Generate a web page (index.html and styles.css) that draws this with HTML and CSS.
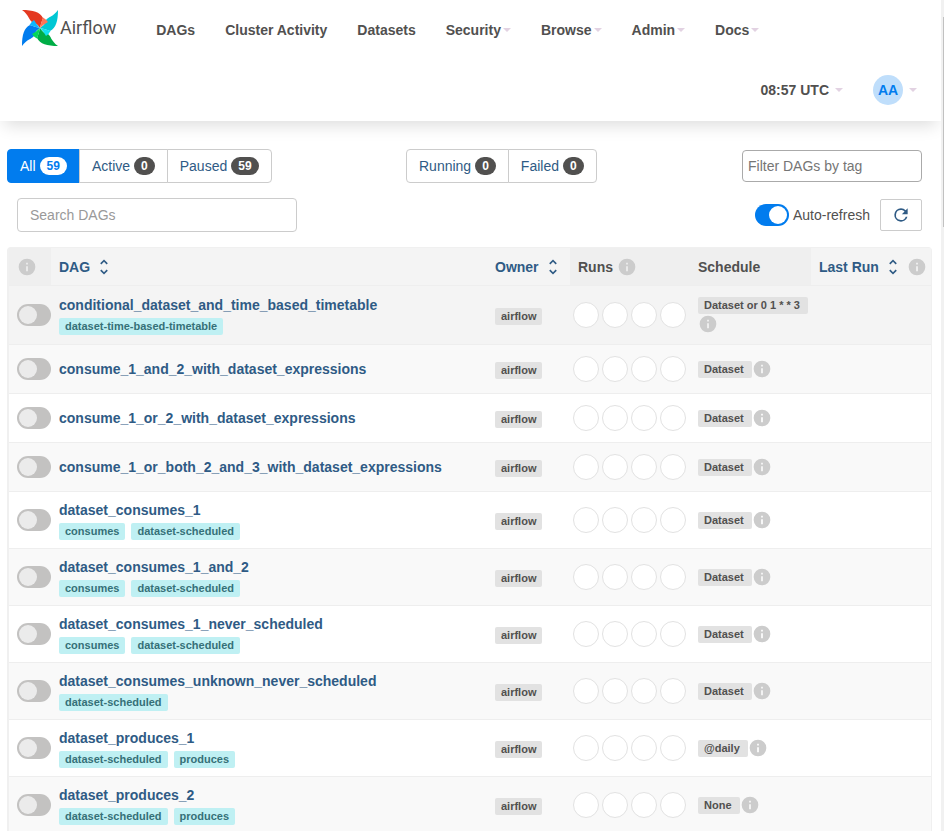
FILE: index.html
```html
<!DOCTYPE html>
<html lang="en">
<head>
    <meta charset="UTF-8">
    <meta name="viewport" content="width=device-width, initial-scale=1.0">
    <title>DAGs - Airflow</title>
    <link rel="stylesheet" href="styles.css">
</head>
<body>

    <!-- shared icons -->
    <svg class="sprite" aria-hidden="true">
        <symbol id="info" viewBox="0 0 24 24">
            <path d="M12 2a10 10 0 1 0 0 20 10 10 0 0 0 0-20zm1 15h-2v-6h2v6zm0-8h-2V7h2v2z"/>
        </symbol>
        <symbol id="sort" viewBox="0 0 24 24">
            <path d="M12 5.83 15.17 9l1.41-1.41L12 3 7.41 7.59 8.83 9 12 5.83zm0 12.34L8.83 15l-1.41 1.41L12 21l4.59-4.59L15.17 15 12 18.17z"/>
        </symbol>
        <symbol id="runs" viewBox="0 0 116 28">
            <circle cx="14" cy="14" r="12.5"/>
            <circle cx="43" cy="14" r="12.5"/>
            <circle cx="72" cy="14" r="12.5"/>
            <circle cx="101" cy="14" r="12.5"/>
        </symbol>
    </svg>

    <div class="page">
        <header class="navbar">
            <div class="nav-main">
                <a class="brand" href="#">
                    <svg class="logo" viewBox="-18 -18 36 36" aria-hidden="true">
                        <defs>
                            <path id="blade" d="M-18-18C-7-18 0-16 3-10Q1-5 0 0C-2-3-5-6-8-6C-11-8-11-13-18-18z"/>
                            <path id="fold" d="M3-10.500Q6-9 8-6Q4-4 0 0Q1-5 3-10.500z"/>
                        </defs>
                        <use href="#blade" fill="#e43921"/>
                        <use href="#blade" fill="#00c7d4" transform="rotate(90)"/>
                        <use href="#blade" fill="#00ad46" transform="rotate(180)"/>
                        <use href="#blade" fill="#017cee" transform="rotate(270)"/>
                        <use href="#fold" fill="#ff7557"/>
                        <use href="#fold" fill="#11e1ee" transform="rotate(90)"/>
                        <use href="#fold" fill="#04d659" transform="rotate(180)"/>
                        <use href="#fold" fill="#0cb6ff" transform="rotate(270)"/>
                    </svg>
                    <span>Airflow</span>
                </a>
                <nav class="menu">
                    <a href="#">DAGs</a>
                    <a href="#">Cluster Activity</a>
                    <a href="#">Datasets</a>
                    <a href="#" class="caret">Security</a>
                    <a href="#" class="caret">Browse</a>
                    <a href="#" class="caret">Admin</a>
                    <a href="#" class="caret">Docs</a>
                </nav>
            </div>
            <div class="nav-user">
                <a href="#" class="caret wide">08:57 UTC</a>
                <a href="#" class="caret wide"><span class="avatar">AA</span></a>
            </div>
        </header>

        <main>
            <div class="filters">
                <div class="btn-group">
                    <button type="button" class="active">All <span class="badge">59</span></button>
                    <button type="button">Active <span class="badge">0</span></button>
                    <button type="button">Paused <span class="badge">59</span></button>
                </div>
                <div class="btn-group">
                    <button type="button">Running <span class="badge">0</span></button>
                    <button type="button">Failed <span class="badge">0</span></button>
                </div>
                <input type="text" class="tag-filter" placeholder="Filter DAGs by tag" aria-label="Filter DAGs by tag">
            </div>

            <div class="search-row">
                <input type="search" class="search" placeholder="Search DAGs" aria-label="Search DAGs">
                <div class="refresh">
                    <input type="checkbox" class="switch" id="auto-refresh" checked>
                    <label for="auto-refresh">Auto-refresh</label>
                    <button type="button" aria-label="Refresh">
                        <svg viewBox="0 0 24 24" aria-hidden="true"><path d="M17.65 6.35A7.96 7.96 0 0 0 12 4a8 8 0 1 0 7.73 10h-2.08A6 6 0 1 1 12 6c1.66 0 3.14.69 4.22 1.78L13 11h7V4l-2.35 2.35z"/></svg>
                    </button>
                </div>
            </div>

            <table class="dags">
                <thead>
                    <tr>
                        <th class="col-switch"><svg class="info"><use href="#info"/></svg></th>
                        <th class="sortable"><a href="#">DAG<svg class="sort"><use href="#sort"/></svg></a></th>
                        <th class="sortable col-owner"><a href="#">Owner<svg class="sort"><use href="#sort"/></svg></a></th>
                        <th class="col-runs"><span>Runs<svg class="info"><use href="#info"/></svg></span></th>
                        <th class="col-schedule">Schedule</th>
                        <th class="sortable col-last"><a href="#">Last Run<svg class="sort"><use href="#sort"/></svg><svg class="info"><use href="#info"/></svg></a></th>
                    </tr>
                </thead>
                <tbody>
                    <tr class="hovered">
                        <td><input type="checkbox" class="switch" aria-label="conditional_dataset_and_time_based_timetable"></td>
                        <td><a href="#" class="name">conditional_dataset_and_time_based_timetable</a>
                            <div class="tags"><a href="#">dataset-time-based-timetable</a></div></td>
                        <td><a href="#" class="label">airflow</a></td>
                        <td class="runs"><svg><use href="#runs"/></svg></td>
                        <td><div class="schedule"><a href="#" class="label">Dataset or 0 1 * * 3</a><svg class="info"><use href="#info"/></svg></div></td>
                        <td></td>
                    </tr>
                    <tr>
                        <td><input type="checkbox" class="switch" aria-label="consume_1_and_2_with_dataset_expressions"></td>
                        <td><a href="#" class="name">consume_1_and_2_with_dataset_expressions</a></td>
                        <td><a href="#" class="label">airflow</a></td>
                        <td class="runs"><svg><use href="#runs"/></svg></td>
                        <td><div class="schedule"><a href="#" class="label">Dataset</a><svg class="info"><use href="#info"/></svg></div></td>
                        <td></td>
                    </tr>
                    <tr>
                        <td><input type="checkbox" class="switch" aria-label="consume_1_or_2_with_dataset_expressions"></td>
                        <td><a href="#" class="name">consume_1_or_2_with_dataset_expressions</a></td>
                        <td><a href="#" class="label">airflow</a></td>
                        <td class="runs"><svg><use href="#runs"/></svg></td>
                        <td><div class="schedule"><a href="#" class="label">Dataset</a><svg class="info"><use href="#info"/></svg></div></td>
                        <td></td>
                    </tr>
                    <tr>
                        <td><input type="checkbox" class="switch" aria-label="consume_1_or_both_2_and_3_with_dataset_expressions"></td>
                        <td><a href="#" class="name">consume_1_or_both_2_and_3_with_dataset_expressions</a></td>
                        <td><a href="#" class="label">airflow</a></td>
                        <td class="runs"><svg><use href="#runs"/></svg></td>
                        <td><div class="schedule"><a href="#" class="label">Dataset</a><svg class="info"><use href="#info"/></svg></div></td>
                        <td></td>
                    </tr>
                    <tr>
                        <td><input type="checkbox" class="switch" aria-label="dataset_consumes_1"></td>
                        <td><a href="#" class="name">dataset_consumes_1</a>
                            <div class="tags"><a href="#">consumes</a><a href="#">dataset-scheduled</a></div></td>
                        <td><a href="#" class="label">airflow</a></td>
                        <td class="runs"><svg><use href="#runs"/></svg></td>
                        <td><div class="schedule"><a href="#" class="label">Dataset</a><svg class="info"><use href="#info"/></svg></div></td>
                        <td></td>
                    </tr>
                    <tr>
                        <td><input type="checkbox" class="switch" aria-label="dataset_consumes_1_and_2"></td>
                        <td><a href="#" class="name">dataset_consumes_1_and_2</a>
                            <div class="tags"><a href="#">consumes</a><a href="#">dataset-scheduled</a></div></td>
                        <td><a href="#" class="label">airflow</a></td>
                        <td class="runs"><svg><use href="#runs"/></svg></td>
                        <td><div class="schedule"><a href="#" class="label">Dataset</a><svg class="info"><use href="#info"/></svg></div></td>
                        <td></td>
                    </tr>
                    <tr>
                        <td><input type="checkbox" class="switch" aria-label="dataset_consumes_1_never_scheduled"></td>
                        <td><a href="#" class="name">dataset_consumes_1_never_scheduled</a>
                            <div class="tags"><a href="#">consumes</a><a href="#">dataset-scheduled</a></div></td>
                        <td><a href="#" class="label">airflow</a></td>
                        <td class="runs"><svg><use href="#runs"/></svg></td>
                        <td><div class="schedule"><a href="#" class="label">Dataset</a><svg class="info"><use href="#info"/></svg></div></td>
                        <td></td>
                    </tr>
                    <tr>
                        <td><input type="checkbox" class="switch" aria-label="dataset_consumes_unknown_never_scheduled"></td>
                        <td><a href="#" class="name">dataset_consumes_unknown_never_scheduled</a>
                            <div class="tags"><a href="#">dataset-scheduled</a></div></td>
                        <td><a href="#" class="label">airflow</a></td>
                        <td class="runs"><svg><use href="#runs"/></svg></td>
                        <td><div class="schedule"><a href="#" class="label">Dataset</a><svg class="info"><use href="#info"/></svg></div></td>
                        <td></td>
                    </tr>
                    <tr>
                        <td><input type="checkbox" class="switch" aria-label="dataset_produces_1"></td>
                        <td><a href="#" class="name">dataset_produces_1</a>
                            <div class="tags"><a href="#">dataset-scheduled</a><a href="#">produces</a></div></td>
                        <td><a href="#" class="label">airflow</a></td>
                        <td class="runs"><svg><use href="#runs"/></svg></td>
                        <td><div class="schedule"><a href="#" class="label">@daily</a><svg class="info"><use href="#info"/></svg></div></td>
                        <td></td>
                    </tr>
                    <tr>
                        <td><input type="checkbox" class="switch" aria-label="dataset_produces_2"></td>
                        <td><a href="#" class="name">dataset_produces_2</a>
                            <div class="tags"><a href="#">dataset-scheduled</a><a href="#">produces</a></div></td>
                        <td><a href="#" class="label">airflow</a></td>
                        <td class="runs"><svg><use href="#runs"/></svg></td>
                        <td><div class="schedule"><a href="#" class="label">None</a><svg class="info"><use href="#info"/></svg></div></td>
                        <td></td>
                    </tr>
                </tbody>
            </table>
        </main>
    </div>
    <div class="scrollbar"><div class="thumb"></div></div>

</body>
</html>
```
FILE: styles.css
```css
* {
    box-sizing: border-box;
}

body {
    display: flex;
    height: 100vh;
    margin: 0;
    overflow: hidden;
    font-family: "Liberation Sans", Arial, sans-serif;
    font-size: 14px;
    line-height: 20px;
    color: #51504f;
    background-color: #fff;
}

a {
    color: #2f5b85;
    text-decoration: none;
}

button,
input {
    font: inherit;
}

svg {
    display: block;
    flex: none;
}

.sprite {
    position: absolute;
    width: 0;
    height: 0;
}

.page {
    flex: 1;
    min-width: 0;
}

/* navbar */
.navbar {
    padding-bottom: 1px;
    background-color: #fff;
    box-shadow: 0 8px 16px -4px rgba(0, 0, 0, 0.14);
}

.navbar a {
    color: #51504f;
    font-weight: bold;
}

.nav-main,
.nav-user {
    display: flex;
    align-items: center;
    height: 60px;
}

.nav-main {
    padding-left: 22px;
    gap: 40px;
}

.navbar .brand {
    display: flex;
    align-items: center;
    gap: 2px;
    margin-bottom: 4px;
    font-family: Roboto, sans-serif;
    font-size: 18px;
    font-weight: normal;
}

.logo {
    width: 36px;
    height: 36px;
}

.menu {
    display: flex;
    gap: 30px;
}

.nav-user {
    justify-content: flex-end;
    gap: 30px;
    padding-right: 24px;
}

.caret {
    display: flex;
    align-items: center;
    gap: 2px;
}

.caret.wide {
    gap: 6px;
}

.caret::after {
    content: "";
    border: 4px solid transparent;
    border-top-color: #e2d2e2;
    border-bottom: 0;
}

.avatar {
    width: 30px;
    border-radius: 50%;
    line-height: 30px;
    text-align: center;
    color: #017cee;
    background-color: #bfdefb;
}

/* filters */
main {
    padding: 28px 9px 0 7px;
}

.filters {
    display: grid;
    grid-template-columns: 399px 1fr 180px;
    align-items: center;
    padding-right: 10px;
}

.btn-group {
    display: flex;
}

.btn-group button {
    display: flex;
    align-items: center;
    gap: 4px;
    height: 34px;
    margin-left: -1px;
    padding: 0 12px;
    border: 1px solid #ccc;
    color: #2f5b85;
    background-color: #fff;
}

.btn-group button:first-child {
    margin-left: 0;
    border-radius: 4px 0 0 4px;
}

.btn-group button:last-child {
    border-radius: 0 4px 4px 0;
}

.btn-group .active {
    border-color: #017cee;
    color: #fff;
    background-color: #017cee;
}

.badge {
    padding: 0 7px;
    border-radius: 10px;
    font-size: 12px;
    font-weight: bold;
    line-height: 18px;
    color: #fff;
    background-color: #51504f;
}

.active .badge {
    color: #017cee;
    background-color: #fff;
}

.tag-filter {
    height: 32px;
    padding: 0 5px;
    border: 1px solid #aaa;
    border-radius: 4px;
}

.search-row {
    display: flex;
    align-items: center;
    justify-content: space-between;
    margin: 15px 0;
    padding: 0 10px;
}

.search {
    width: 280px;
    height: 34px;
    padding: 0 12px;
    border: 1px solid #ccc;
    border-radius: 4px;
}

.search::placeholder {
    color: #999;
}

.refresh {
    display: flex;
    align-items: center;
    gap: 4px;
}

.refresh button {
    display: flex;
    align-items: center;
    justify-content: center;
    width: 42px;
    height: 32px;
    margin-left: 6px;
    border: 1px solid #ccc;
    border-radius: 2px;
    background-color: #fff;
}

.refresh button svg {
    width: 20px;
    fill: #2f5b85;
}

.switch {
    display: block;
    appearance: none;
    width: 34px;
    height: 22px;
    margin: 0;
    padding: 2px;
    border-radius: 11px;
    background-color: #c3c2c1;
}

.switch::before {
    content: "";
    display: block;
    width: 18px;
    height: 18px;
    border-radius: 50%;
    background-color: #ebebeb;
}

.switch:checked {
    background-color: #017cee;
}

.switch:checked::before {
    margin-left: auto;
    background-color: #fff;
}

/* dags table */
.dags {
    width: 100%;
    table-layout: fixed;
    border-collapse: separate;
    border-spacing: 0;
    border: 1px solid #f0f0f0;
    border-left-width: 2px;
    border-radius: 4px;
}

.dags th {
    height: 38px;
    padding: 0 4px 0 8px;
    border-bottom: 1px solid #eee;
    text-align: left;
    white-space: nowrap;
    background-color: #efefef;
}

.dags .sortable {
    background-color: #f4f4f4;
}

.dags th a,
.dags th span {
    display: flex;
    align-items: center;
}

.col-switch {
    width: 42px;
}

.col-owner {
    width: 83px;
}

.col-runs {
    width: 120px;
}

.col-schedule {
    width: 121px;
}

.col-last {
    width: 120px;
}

.info {
    width: 20px;
    height: 20px;
    fill: #ccc;
}

.sort {
    width: 20px;
    height: 20px;
    margin-left: 4px;
    fill: #2f5b85;
}

.sort + .info,
.col-runs .info {
    margin-left: 4px;
}

.dags td {
    height: 49px;
    padding: 8px;
    border-bottom: 1px solid #eee;
    vertical-align: middle;
}

.dags tbody tr:nth-child(even) {
    background-color: #f9f9f9;
}

.dags .hovered {
    background-color: #f4f4f4;
}

.dags .hovered td {
    height: 59px;
}

.name {
    display: block;
    font-weight: bold;
}

.tags {
    display: flex;
    gap: 6px;
    margin-top: 3px;
}

.tags a,
.label {
    padding: 0 6px;
    border-radius: 2px;
    font-size: 11px;
    font-weight: bold;
    line-height: 17px;
    white-space: nowrap;
}

.tags a {
    color: #367078;
    background-color: #bff0f3;
}

.label {
    display: inline-block;
    color: #51504f;
    background-color: #e2e2e2;
}

.dags .runs {
    padding: 0 2px;
}

.runs svg {
    width: 116px;
    height: 28px;
    fill: #fff;
    stroke: #e2e2e2;
}

.schedule {
    display: flex;
    flex-wrap: wrap;
    align-items: center;
}

.schedule .label {
    padding-right: 8px;
}

/* scrollbar */
.scrollbar {
    width: 3px;
    padding: 17px 0 0 2px;
    background-color: #f1f1f1;
}

.thumb {
    height: 210px;
    background-color: #c1c1c1;
}
```
